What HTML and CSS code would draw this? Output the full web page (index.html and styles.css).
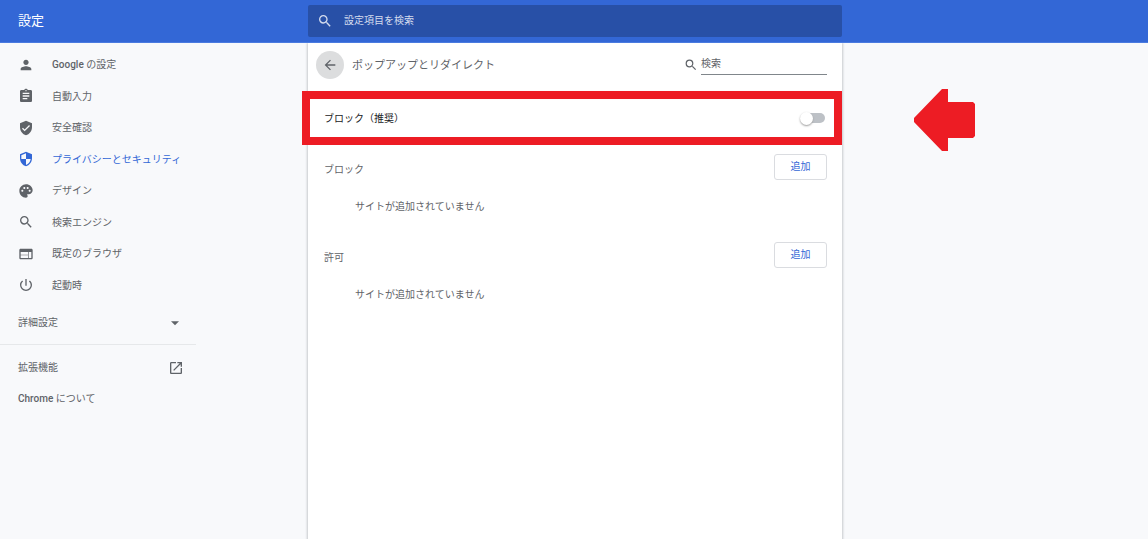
FILE: index.html
```html
<!DOCTYPE html>
<html lang="ja">
<head>
<meta charset="utf-8">
<title>設定</title>
<link rel="stylesheet" href="styles.css">
</head>
<body>
<header class="toolbar">
  <h1 class="toolbar-title">設定</h1>
  <label class="search">
    <svg class="icon" viewBox="0 0 24 24" aria-hidden="true"><path d="M15.5 14h-.79l-.28-.27A6.47 6.47 0 0 0 16 9.5 6.5 6.5 0 1 0 9.5 16c1.61 0 3.09-.59 4.23-1.57l.27.28v.79l5 4.99L20.49 19l-4.99-5zm-6 0C7.01 14 5 11.99 5 9.5S7.01 5 9.5 5 14 7.01 14 9.5 11.99 14 9.5 14z"/></svg>
    <input class="search-input" type="text" placeholder="設定項目を検索" aria-label="設定項目を検索">
  </label>
</header>
<div class="layout">
  <nav class="sidebar">
    <div class="menu">
      <a class="menu-item" href="#people"><svg class="icon" viewBox="0 0 24 24"><path d="M12 12c2.21 0 4-1.79 4-4s-1.79-4-4-4-4 1.79-4 4 1.79 4 4 4zm0 2c-2.67 0-8 1.34-8 4v2h16v-2c0-2.66-5.33-4-8-4z"/></svg><span><span class="latin">Google</span> の設定</span></a>
      <a class="menu-item" href="#autofill"><svg class="icon" viewBox="0 0 24 24"><path d="M19 3h-4.180C14.400 1.840 13.300 1 12 1s-2.400.84-2.820 2H5c-1.100 0-2 .9-2 2v14c0 1.100.9 2 2 2h14c1.100 0 2-.9 2-2V5c0-1.100-.9-2-2-2zm-7 0c.55 0 1 .45 1 1s-.45 1-1 1-1-.45-1-1 .45-1 1-1zm2 14H7v-2h7v2zm3-4H7v-2h10v2zm0-4H7V7h10v2z"/></svg><span>自動入力</span></a>
      <a class="menu-item" href="#safety"><svg class="icon" viewBox="0 0 24 24"><path d="M12 1L3 5v6c0 5.550 3.840 10.740 9 12 5.160-1.260 9-6.450 9-12V5l-9-4zm-2 16l-4-4 1.410-1.410L10 14.170l6.590-6.590L18 9l-8 8z"/></svg><span>安全確認</span></a>
      <a class="menu-item menu-item-selected" href="#privacy"><svg class="icon" viewBox="0 0 24 24"><path d="M12 1L3 5v6c0 5.550 3.840 10.740 9 12 5.160-1.260 9-6.450 9-12V5l-9-4zm0 10.990h7c-.53 4.120-3.280 7.790-7 8.940V12H5V6.300l7-3.110v8.800z"/></svg><span>プライバシーとセキュリティ</span></a>
      <a class="menu-item" href="#appearance"><svg class="icon" viewBox="0 0 24 24"><path d="M12 2C6.490 2 2 6.490 2 12s4.490 10 10 10c1.380 0 2.500-1.120 2.500-2.500 0-.61-.23-1.200-.64-1.670-.08-.1-.13-.21-.13-.33 0-.28.22-.5.500-.5H16c3.310 0 6-2.690 6-6 0-4.960-4.490-9-10-9zM6.500 13C5.670 13 5 12.330 5 11.500S5.670 10 6.500 10 8 10.670 8 11.500 7.330 13 6.500 13zm3-4C8.670 9 8 8.330 8 7.500S8.670 6 9.500 6s1.500.67 1.500 1.500S10.330 9 9.500 9zm5 0C13.670 9 13 8.330 13 7.500S13.670 6 14.500 6s1.500.67 1.500 1.500S15.330 9 14.500 9zm3 4c-.83 0-1.500-.67-1.500-1.500s.67-1.500 1.500-1.500 1.500.67 1.500 1.500-.67 1.500-1.500 1.500z"/></svg><span>デザイン</span></a>
      <a class="menu-item" href="#search"><svg class="icon" viewBox="0 0 24 24"><path d="M15.500 14h-.79l-.28-.27A6.470 6.470 0 0 0 16 9.500 6.500 6.500 0 1 0 9.500 16c1.610 0 3.090-.59 4.230-1.570l.27.28v.79l5 4.990L20.490 19l-4.990-5zm-6 0C7.010 14 5 11.990 5 9.500S7.010 5 9.500 5 14 7.010 14 9.500 11.990 14 9.500 14z"/></svg><span>検索エンジン</span></a>
      <a class="menu-item" href="#browser"><svg class="icon" viewBox="0 0 24 24"><path d="M20 4H4c-1.100 0-2 .9-2 2v12c0 1.100.9 2 2 2h16c1.100 0 2-.9 2-2V6c0-1.100-.9-2-2-2zm-5 14H4v-4h11v4zm0-5H4V9h11v4zm5 5h-4V9h4v9z"/></svg><span>既定のブラウザ</span></a>
      <a class="menu-item" href="#startup"><svg class="icon" viewBox="0 0 24 24"><path d="M13 3h-2v10h2V3zm4.830 2.170l-1.420 1.420A6.920 6.920 0 0 1 19 12c0 3.870-3.130 7-7 7s-7-3.130-7-7c0-2.190 1.010-4.140 2.580-5.420L6.170 5.170A8.930 8.930 0 0 0 3 12a9 9 0 0 0 18 0c0-2.740-1.230-5.180-3.170-6.830z"/></svg><span>起動時</span></a>
    </div>
    <button class="advanced" type="button">詳細設定<svg class="icon" viewBox="0 0 24 24" aria-hidden="true"><path d="M6 9.500l6 6 6-6z"/></svg></button>
    <div class="links">
      <a class="link" href="#extensions">拡張機能<svg class="icon" viewBox="0 0 24 24" aria-hidden="true"><path d="M19 19H5V5h7V3H5c-1.110 0-2 .9-2 2v14c0 1.100.89 2 2 2h14c1.100 0 2-.9 2-2v-7h-2v7zM14 3v2h3.590l-9.830 9.830 1.410 1.410L19 6.410V10h2V3h-7z"/></svg></a>
      <a class="link" href="#about"><span><span class="latin">Chrome</span> について</span></a>
    </div>
  </nav>
  <main class="card">
    <div class="page-head">
      <button class="back" type="button" aria-label="戻る"><svg class="icon" viewBox="0 0 24 24"><path d="M20 11H7.830l5.590-5.590L12 4l-8 8 8 8 1.410-1.410L7.830 13H20v-2z"/></svg></button>
      <h2 class="page-title">ポップアップとリダイレクト</h2>
      <label class="filter">
        <svg class="icon" viewBox="2 2 20 20" aria-hidden="true"><path d="M15.500 14h-.79l-.28-.27A6.470 6.470 0 0 0 16 9.500 6.500 6.500 0 1 0 9.500 16c1.610 0 3.090-.59 4.230-1.570l.27.28v.79l5 4.990L20.490 19l-4.990-5zm-6 0C7.010 14 5 11.990 5 9.500S7.010 5 9.500 5 14 7.010 14 9.500 11.990 14 9.500 14z"/></svg>
        <input class="filter-input" type="text" placeholder="検索" aria-label="検索">
      </label>
    </div>
    <div class="setting">
      <label class="setting-label" for="block">ブロック（推奨）</label>
      <input class="toggle" id="block" type="checkbox" role="switch">
      <svg class="arrow" viewBox="0 0 61 62" aria-hidden="true"><path d="M28 0h6v13h25l2 2v32l-2 2H34v13h-6L0 33v-4z"/></svg>
    </div>
    <section class="sites">
      <div class="sites-head"><h3 class="sites-title">ブロック</h3><button class="add" type="button">追加</button></div>
      <p class="empty">サイトが追加されていません</p>
    </section>
    <section class="sites">
      <div class="sites-head"><h3 class="sites-title">許可</h3><button class="add" type="button">追加</button></div>
      <p class="empty">サイトが追加されていません</p>
    </section>
  </main>
</div>
</body>
</html>
```
FILE: styles.css
```css
* { box-sizing: border-box; }

body {
  margin: 0;
  min-height: 100vh;
  display: flex;
  flex-direction: column;
  background: #f8f9fb;
  color: #5f6368;
  font: 400 10px/16px Roboto, "Noto Sans CJK JP", sans-serif;
}

h1, h2, h3, p { margin: 0; font-weight: 400; }
button, input { font: inherit; color: inherit; }
a { color: inherit; text-decoration: none; }
.icon { width: 16px; height: 16px; flex: none; fill: currentColor; }
.latin { font-weight: 500; }

.toolbar, .layout {
  display: grid;
  grid-template-columns: 308px minmax(0, 534px) 1fr;
}

.toolbar {
  align-items: center;
  height: 43px;
  background: #3367d6;
  border-bottom: 1px solid #4a7be0;
}
.toolbar-title { padding-left: 18px; font-size: 13px; color: #fff; }
.search {
  display: flex;
  align-items: center;
  gap: 10px;
  height: 32px;
  padding: 0 10px 0 9px;
  border-radius: 2px;
  background: #2850a7;
  color: #d4dcee;
}
.search-input {
  flex: 1;
  min-width: 0;
  padding: 0 0 0 1px;
  border: 0;
  outline: 0;
  background: none;
}
input::placeholder { color: inherit; opacity: 1; }

.layout { flex: 1; }

.sidebar { width: 196px; padding-top: 6px; }
.menu { display: grid; grid-auto-rows: 1fr; min-height: 252px; }
.menu-item { display: flex; align-items: center; gap: 18px; padding-left: 18px; white-space: nowrap; }
.menu-item span { padding-top: 1px; }
.menu-item-selected { color: #3367d6; }
.advanced {
  display: flex;
  align-items: center;
  justify-content: space-between;
  width: 100%;
  height: 43px;
  padding: 0 13px 0 18px;
  border: 0;
  background: none;
}
.links { border-top: 1px solid #e6e8ea; padding-top: 7px; }
.link {
  display: flex;
  align-items: center;
  justify-content: space-between;
  height: 31px;
  padding: 0 12px 0 18px;
}

.card { background: #fff; box-shadow: 0 1px 2px 1px #c8cacd; clip-path: inset(0 -600px 0 -8px); }
.page-head { display: flex; align-items: center; height: 48px; padding: 0 15px 4px 8px; }
.back {
  display: grid;
  place-items: center;
  width: 28px;
  height: 28px;
  padding: 0;
  border: 0;
  border-radius: 50%;
  background: #dcddde;
}
.page-title { flex: 1; padding: 2px 0 0 8px; font-size: 11px; }
.filter { display: flex; align-items: center; gap: 4px; }
.filter .icon { width: 12px; height: 12px; }
.filter-input {
  width: 126px;
  height: 20px;
  padding: 0 0 2px;
  border: 0;
  border-bottom: 1px solid #80868b;
  border-radius: 0;
  outline: 0;
  background: none;
}

.setting {
  position: relative;
  display: flex;
  align-items: center;
  justify-content: space-between;
  height: 54px;
  padding: 0 17px 0 16px;
  color: #202124;
}
.setting-label { padding-top: 2px; }
.setting::before {
  content: "";
  position: absolute;
  inset: 0 0 0 -6px;
  border: 8px solid #ed1c24;
  pointer-events: none;
}
.toggle {
  appearance: none;
  display: flex;
  align-items: center;
  width: 24px;
  height: 10px;
  margin: 0;
  border-radius: 5px;
  background: #bdc1c6;
}
.toggle::before {
  content: "";
  width: 13px;
  height: 13px;
  flex: none;
  margin-left: -1px;
  border-radius: 50%;
  background: #fff;
  box-shadow: 0 1px 2px #9a9a9a;
}
.toggle:checked { justify-content: flex-end; }
.arrow {
  position: absolute;
  top: -2px;
  left: calc(100% + 72px);
  width: 61px;
  height: 62px;
  fill: #ed1c24;
}

.sites { height: 88px; padding: 9px 15px 0 16px; }
.sites-head { display: flex; align-items: center; justify-content: space-between; }
.sites-title { padding-top: 6px; font-size: 10px; }
.add {
  width: 53px;
  height: 26px;
  padding: 0;
  border: 1px solid #dadce0;
  border-radius: 3px;
  background: #fff;
  color: #3367d6;
}
.empty { padding: 19px 0 0 31px; }
```
